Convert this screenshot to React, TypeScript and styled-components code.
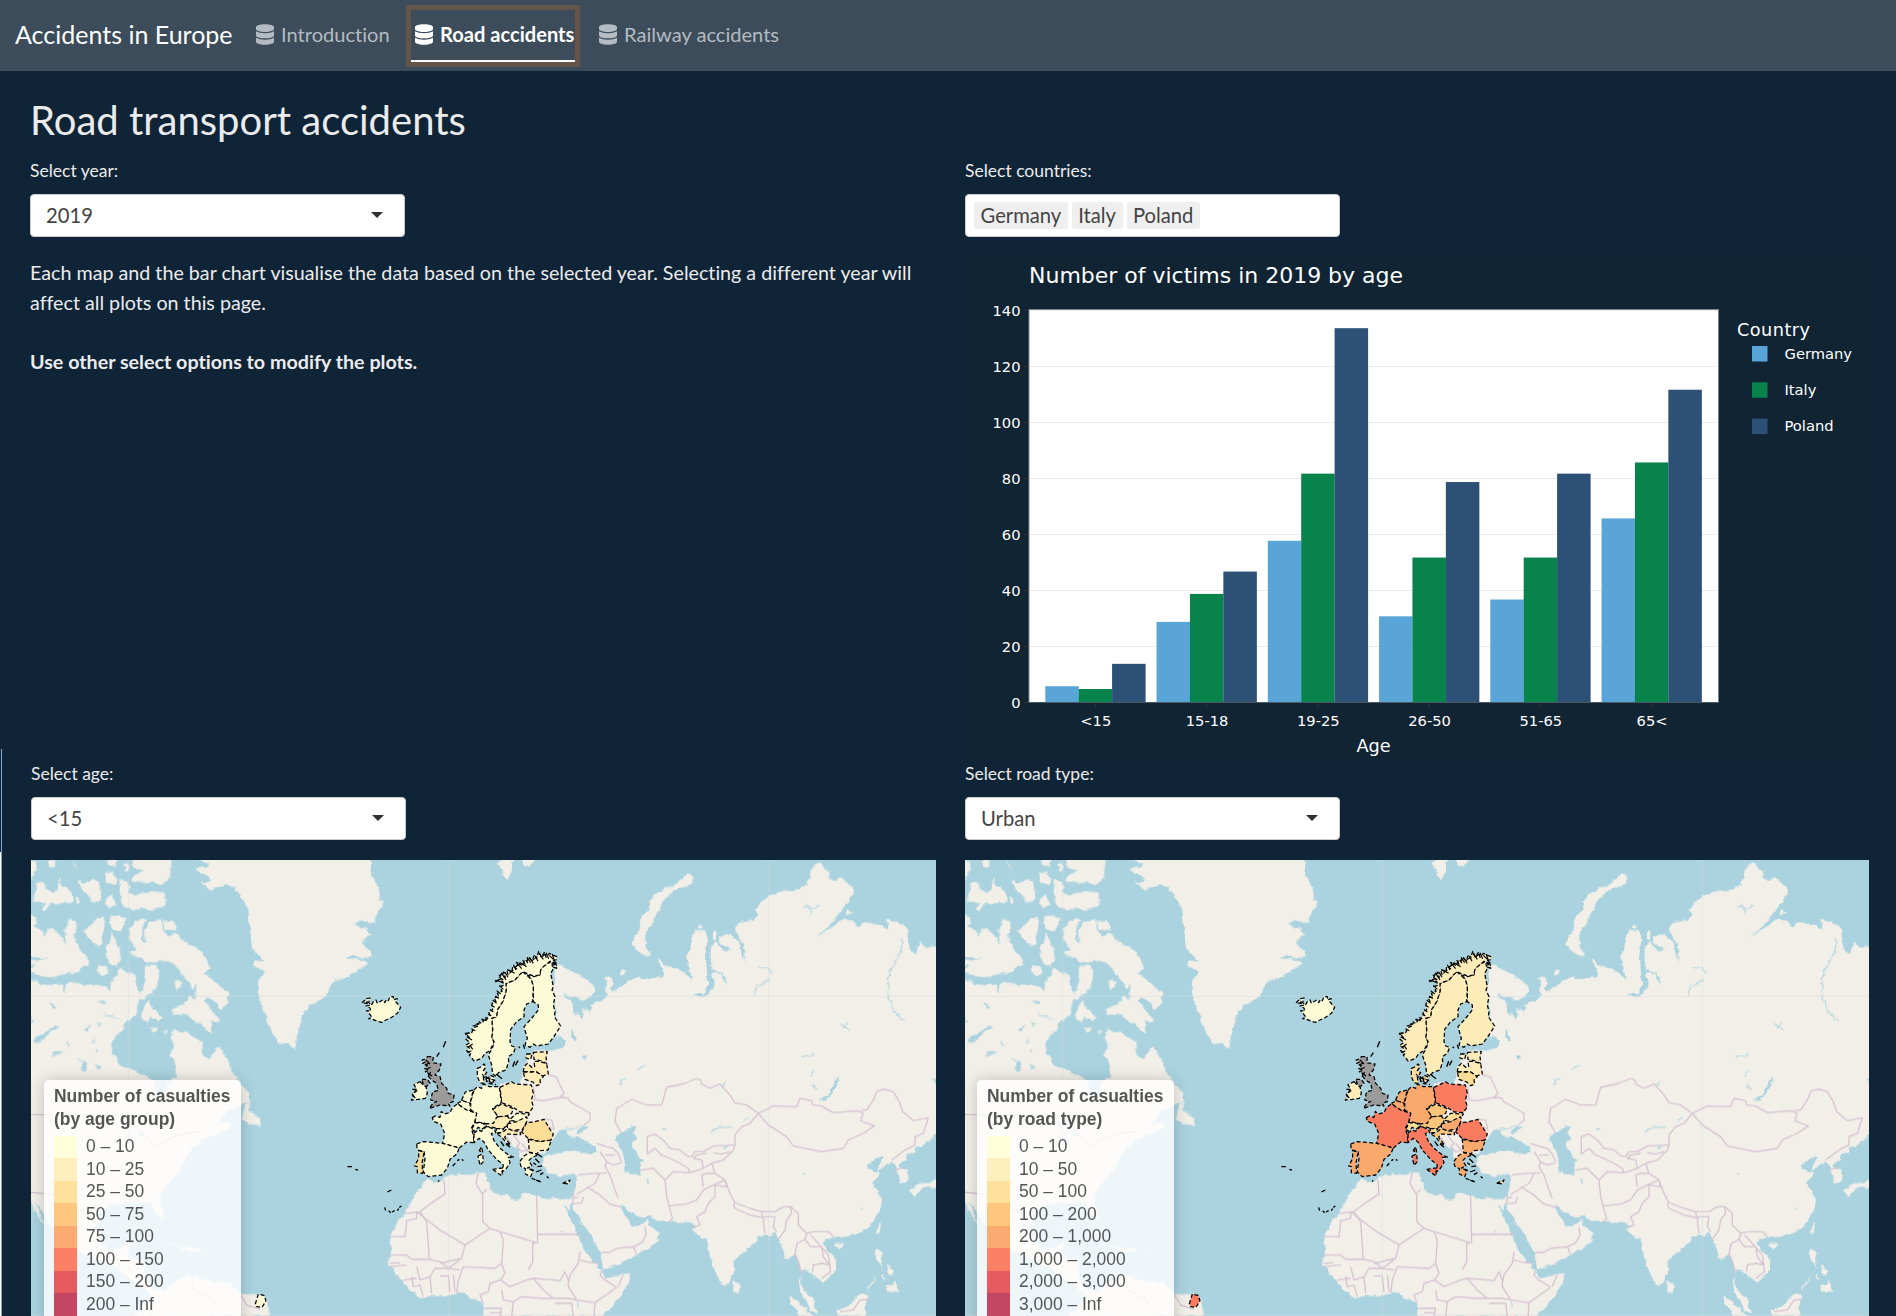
import React from "react";
import styled, { createGlobalStyle } from "styled-components";
import { FaDatabase } from "react-icons/fa";

const GlobalStyle = createGlobalStyle`
  * { box-sizing: border-box; }
  body { margin: 0; background: #0f2437; }
`;

const Page = styled.div`
  height: 1316px;
  overflow: hidden;
  background: #0f2437;
  color: #ebebeb;
  font-family: Lato, "Liberation Sans", sans-serif;
  font-variant-ligatures: none;
`;

const Navbar = styled.nav`
  display: flex;
  align-items: center;
  height: 71px;
  padding-left: 15px;
  background: #3c4c5a;
`;

const Brand = styled.div`
  width: 241px;
  padding-bottom: 3px;
  color: #fff;
  font-size: 25px;
  line-height: 36px;
  white-space: nowrap;
`;

const NavItem = styled.div<{ $active?: boolean; $width: number }>`
  display: flex;
  align-items: center;
  gap: 7px;
  flex: none;
  width: ${(p) => p.$width}px;
  height: ${(p) => (p.$active ? 62 : 36)}px;
  padding-left: ${(p) => (p.$active ? 4 : 0)}px;
  padding-bottom: ${(p) => (p.$active ? 3 : 3)}px;
  border: ${(p) => (p.$active ? "5px solid #64554b" : "0")};
  box-shadow: ${(p) => (p.$active ? "inset 0 -2px 0 #fff" : "none")};
  color: ${(p) => (p.$active ? "#fff" : "#b4bbc2")};
  font-size: 20.1px;
  font-weight: ${(p) => (p.$active ? 700 : 400)};
  white-space: nowrap;
  svg { width: 18px; height: 21px; flex: none; }
`;

const NavGap = styled.div<{ $width: number }>`
  flex: none;
  width: ${(p) => p.$width}px;
`;

const Heading = styled.h1`
  margin: 24px 0 13px 30px;
  font-size: 40px;
  font-weight: 400;
  line-height: 50px;
`;

const Columns = styled.section<{ $height: number; $left: number }>`
  position: relative;
  display: grid;
  grid-template-columns: ${(p) => 965 - p.$left}px 905px;
  height: ${(p) => p.$height}px;
  padding-left: ${(p) => p.$left}px;
`;

/* Thin scroll track that shows along the window's left side. */
const Track = styled.div`
  position: absolute;
  left: 0;
  top: -12px;
  bottom: 0;
  width: 2px;
  border-right: 1px solid #86a3c4;
  background: linear-gradient(#0f2437 103px, #fff 103px);
`;

const Column = styled.div`
  display: flex;
  flex-direction: column;
`;

const Label = styled.label`
  margin-bottom: 10px;
  font-size: 17.5px;
  line-height: 26px;
`;

const SelectBox = styled.div<{ $tags?: boolean }>`
  display: flex;
  align-items: center;
  justify-content: space-between;
  width: 375px;
  height: 43px;
  padding: ${(p) => (p.$tags ? "0 8px 1px" : "0 21px 2px 15px")};
  border: 1px solid #ccc;
  border-radius: 4px;
  background: #fff;
  color: #444;
  font-size: 20.2px;
`;

const Caret = styled.span`
  border: 6px solid transparent;
  border-top-color: #303030;
  border-bottom: 0;
`;

const Tags = styled.div`
  display: flex;
  gap: 4px;
`;

const Tag = styled.span`
  padding: 0 6.5px;
  border-radius: 3px;
  background: #efefef;
  line-height: 27px;
`;

const Text = styled.p<{ $strong?: boolean }>`
  margin: ${(p) => (p.$strong ? "29.6px 0 0" : "21px 0 0")};
  width: 900px;
  font-size: 19.7px;
  font-weight: ${(p) => (p.$strong ? 700 : 400)};
  line-height: 29.6px;
`;

const ChartPanel = styled.svg`
  display: block;
  margin-top: 20px;
  background: #112433;
  font-family: Verdana, "DejaVu Sans", sans-serif;
`;

const MapFrame = styled.div<{ $width: number }>`
  position: relative;
  width: ${(p) => p.$width}px;
  height: 456px;
  margin-top: 20px;
  overflow: hidden;
  background: #aad3df;
`;

const MapCanvas = styled.svg`
  position: absolute;
  inset: 0;
  width: 905px;
  height: 456px;
`;

const Legend = styled.div<{ $left: number }>`
  position: absolute;
  left: ${(p) => p.$left}px;
  top: 220px;
  width: 197px;
  height: 260px;
  padding: 5px 10px;
  border-radius: 5px;
  background: rgba(255, 255, 255, 0.8);
  box-shadow: 0 0 15px rgba(0, 0, 0, 0.2);
  color: #555;
  font-family: "Liberation Sans", Arial, sans-serif;
  font-size: 17.45px;
`;

const LegendTitle = styled.div`
  margin-bottom: 4px;
  font-weight: 700;
  line-height: 23.3px;
  white-space: nowrap;
`;

const LegendRow = styled.div`
  display: flex;
  align-items: center;
  gap: 9.5px;
  height: 22.5px;
  white-space: nowrap;
`;

const Swatch = styled.span<{ $color: string }>`
  width: 22.5px;
  height: 100%;
  background: ${(p) => p.$color};
`;

/* ---------- bar chart ---------- */

const SERIES = [
  { name: "Germany", color: "#5aa5d8", values: [6, 29, 58, 31, 37, 66] },
  { name: "Italy", color: "#08834b", values: [5, 39, 82, 52, 52, 86] },
  { name: "Poland", color: "#2d5077", values: [14, 47, 134, 79, 82, 112] },
];
const AGES = ["<15", "15-18", "19-25", "26-50", "51-65", "65<"];
const TICKS = [0, 20, 40, 60, 80, 100, 120, 140];
const yOf = (v: number) => 446 - v * 2.797;

function VictimsChart() {
  return (
    <ChartPanel width="905" height="500" viewBox="0 0 905 500">
      <text x="64" y="25.5" fontSize="22" fill="#fff" textLength="374">Number of victims in 2019 by age</text>
      <rect x="64" y="52.5" width="689.5" height="393" fill="#fff" stroke="#7c878d" />
      {TICKS.map((t) => (
        <g key={t}>
          <line x1="64.5" x2="753" y1={Math.round(yOf(t)) - 0.5} y2={Math.round(yOf(t)) - 0.5} stroke="#ebebeb" />
          <line x1="59" x2="64" y1={Math.round(yOf(t)) - 0.5} y2={Math.round(yOf(t)) - 0.5} stroke="#333" />
          <text x="55.5" y={yOf(t) + 4.8} fontSize="14.7" fill="#fff" textAnchor="end">{t}</text>
        </g>
      ))}
      {AGES.map((age, i) => {
        const left = 80.3 + i * 111.25;
        return (
          <g key={age}>
            {SERIES.map((s, k) => (
              <rect key={s.name} x={left + k * 33.4} y={yOf(s.values[i])} width="33.5" height={446 - yOf(s.values[i])} fill={s.color} />
            ))}
            <line x1={left + 50.1} x2={left + 50.1} y1="446" y2="451" stroke="#333" />
            <text x={left + 50.5} y="469" fontSize="14.7" fill="#fff" textAnchor="middle">{age}</text>
          </g>
        );
      })}
      <line x1="64" x2="754" y1="445.5" y2="445.5" stroke="#4c5a66" />
      <text x="408.5" y="495" fontSize="17.7" fill="#fff" textAnchor="middle">Age</text>
      <text x="772" y="78.5" fontSize="17.7" fill="#fff" textLength="73">Country</text>
      {SERIES.map((s, k) => (
        <g key={s.name}>
          <rect x="787" y={89 + k * 36.3} width="15.5" height="15.5" fill={s.color} />
          <text x="819.5" y={101.5 + k * 36.3} fontSize="14.7" fill="#fff">{s.name}</text>
        </g>
      ))}
    </ChartPanel>
  );
}

/* ---------- maps ---------- */

const EURASIA =
  "M345,345 365,350 385,358 410,370 440,388 462,405 466,425 455,440 435,450 410,445 385,435 372,428 378,440 392,450 398,462 398,480 402,495 415,490 425,505 432,492 425,478 440,480 452,485 455,465 470,455 490,447 500,435 498,415 500,395 490,383 505,380 520,390 522,405 512,412 515,425 528,425 538,410 560,398 580,385 600,378 615,388 640,382 655,375 668,382 672,370 662,350 652,335 655,325 670,345 690,350 710,352 735,370 755,390 752,370 742,345 740,310 752,290 758,260 768,240 790,240 802,255 800,290 798,325 800,350 802,385 808,400 798,420 792,436 775,430 762,435 780,443 797,443 810,425 820,410 822,390 812,375 825,368 845,372 852,392 863,408 855,385 850,370 830,364 815,360 812,325 812,290 826,280 832,262 826,240 820,240 818,262 832,280 850,300 875,300 855,290 835,275 840,258 870,250 880,265 900,275 905,300 913,335 914,300 905,270 890,250 888,220 920,212 945,208 955,195 948,180 960,160 985,140 1010,128 1040,122 1075,118 1085,110 1105,105 1100,95 1112,85 1108,65 1120,48 1140,40 1155,55 1170,68 1160,85 1185,90 1205,85 1225,95 1238,115 1238,135 1225,155 1205,180 1180,210 1160,235 1125,262 1170,235 1195,215 1215,205 1240,215 1255,232 1280,215 1310,222 1345,238 1342,210 1365,212 1390,222 1405,240 1400,270 1410,295 1425,315 1435,290 1440,278 1455,290 1500,290 1500,845 1465,875 1445,888 1430,890 1425,905 1400,915 1398,930 1378,940 1380,950 1400,960 1405,985 1400,1000 1378,1003 1375,980 1372,965 1368,948 1358,935 1340,942 1322,955 1312,962 1318,945 1328,925 1320,920 1300,935 1283,943 1287,955 1300,962 1320,968 1312,980 1298,992 1305,1010 1318,1030 1325,1050 1322,1075 1310,1095 1300,1115 1280,1135 1255,1150 1225,1155 1200,1160 1178,1160 1160,1165 1148,1180 1160,1198 1178,1215 1188,1235 1188,1260 1170,1280 1148,1302 1140,1290 1120,1278 1105,1262 1090,1258 1082,1275 1080,1300 1095,1325 1115,1340 1125,1365 1132,1392 1115,1385 1105,1365 1090,1340 1080,1318 1076,1290 1085,1270 1080,1240 1065,1215 1060,1212 1050,1222 1035,1225 1030,1200 1020,1180 1012,1160 1005,1145 990,1155 975,1157 955,1160 950,1175 925,1195 900,1215 880,1230 882,1255 878,1275 866,1298 852,1308 838,1292 820,1250 808,1210 803,1180 800,1165 790,1168 770,1152 758,1135 770,1130 750,1118 720,1115 685,1117 650,1112 632,1098 610,1103 585,1095 560,1080 550,1062 540,1060 545,1080 565,1110 575,1130 595,1128 610,1120 625,1108 625,1122 640,1138 662,1150 650,1175 625,1195 600,1210 575,1222 545,1238 515,1250 490,1260 485,1235 482,1210 465,1180 450,1150 430,1125 415,1100 400,1075 395,1060 392,1045 400,1035 408,1010 408,985 405,975 385,970 360,978 345,972 320,970 312,950 305,935 320,915 345,912 375,902 400,900 430,908 455,915 470,908 468,890 450,878 430,870 415,860 425,848 440,838 440,828 420,838 408,846 420,855 395,862 380,842 365,838 350,850 342,860 330,880 325,905 310,912 265,920 235,925 240,900 215,885 190,850 185,840 180,700 240,700 250,685 250,650 285,600 325,604 340,598 370,590 350,570 345,530 350,480 340,420Z";

const AFRICA =
  "M397,1045 375,1048 350,1045 320,1048 290,1040 265,1030 245,1028 238,1050 215,1048 195,1035 165,1030 145,1018 150,1000 140,990 135,968 115,968 90,975 60,972 20,980 0,992 -20,995 -37,985 -74,1030 -102,1090 -125,1110 -151,1160 -144,1200 -156,1237 -130,1275 -110,1298 -85,1325 -53,1345 -20,1335 12,1340 50,1330 75,1328 85,1345 110,1350 130,1360 130,1400 480,1400 510,1378 540,1340 560,1305 572,1270 545,1272 520,1278 495,1282 485,1265 465,1240 440,1210 425,1180 410,1150 395,1115 380,1085 370,1062 385,1082 393,1062Z";

const EAST_ISLANDS = [
  "M745,72 762,85 755,100 730,112 700,125 680,140 665,165 650,190 640,215 625,240 615,265 618,290 637,318 610,315 595,305 577,285 585,260 598,240 605,205 625,180 628,155 650,130 675,112 700,108 720,92Z",
  "M172,38 190,28 220,28 215,60 205,92 190,68Z M250,28 283,28 268,50 250,46Z",
  "M540,365 548,354 558,360 552,374 542,376Z M773,230 780,220 788,232 778,236Z M1218,188 1226,178 1235,186 1226,197Z",
  "M880,1290 900,1310 895,1330 880,1328Z M1185,1190 1197,1178 1210,1182 1197,1197Z M1325,1117 1315,1155 1308,1140Z",
  "M1312,1192 1330,1210 1322,1245 1330,1258 1305,1225Z M1345,1245 1362,1262 1355,1280 1345,1270Z M1325,1265 1340,1290 1330,1285Z M1340,1310 1365,1295 1375,1325 1345,1325Z M1320,1268 1280,1322 1284,1310Z",
  "M1190,1385 1220,1370 1240,1350 1265,1330 1290,1340 1275,1360 1280,1400 1195,1400Z M1042,1335 1070,1350 1105,1385 1120,1400 1080,1400 1060,1370Z",
  "M1410,1020 1430,1005 1450,998 1470,1000 1500,980 1500,1010 1455,1012 1440,1015 1425,1042Z",
];

const EAST_WATER = [
  "M590,830 575,828 560,838 540,850 527,862 532,880 545,900 552,920 555,950 550,965 570,972 602,973 600,940 612,930 595,915 578,895 580,880 590,865 580,850Z",
  "M1195,678 1197,690 1180,730 1155,752 1135,750 1165,738Z",
  "M350,560 365,560 375,575 370,592 352,588Z M395,540 403,545 410,570 402,575 394,560Z M428,615 440,620 438,630 428,625Z",
  "M1475,690 1500,680 1500,710 1485,700Z M622,988 630,995 620,998Z M1088,968 1098,972 1092,978Z M1262,1068 1269,1072 1264,1075Z",
  "M320,905 345,903 342,910 322,910Z M665,835 682,835 672,840Z M850,890 870,893 852,898Z",
];

const EAST_RIVERS = [
  "M1385,265 Q1388,310 1370,325 Q1340,370 1345,430 Q1350,480 1395,515",
  "M815,850 Q815,832 845,833 L880,830",
  "M1090,170 1120,175 1142,165 M1100,165 1115,192 M1128,175 1135,160",
  "M955,350 985,355 995,370 M965,400 990,390 M955,410 975,402 M945,435 950,400",
  "M540,710 545,690 560,682 M595,660 615,645 M850,710 855,695 M1085,620 1120,615 M1112,680 1125,660 M1115,700 1130,720 M1200,520 1225,540 M1210,535 1220,515",
  "M372,1065 385,1085 M365,1140 370,1145 M365,840 440,828 M410,1350 415,1370 M925,800 912,810",
];

const EAST_BORDERS = [
  "M545,850 525,815 530,775 575,748 620,765 665,765 672,740 680,712 735,700 770,685 782,690 785,702 810,715 840,702 870,735 885,758 920,765 955,790 930,820 905,830 885,855 885,885 820,888 790,905 765,905 755,920 742,918 720,900 690,895 670,870 645,852 622,860 622,912",
  "M955,790 1000,768 1070,770 1080,745 1115,752 1118,765 1145,768 1180,788 1250,782 1270,790 1262,812 1303,828 1270,850 1225,870 1210,895 1145,905 1060,888 1040,860 985,825 955,790",
  "M1262,782 1280,780 1300,750 1312,722 1335,718 1360,725 1378,755 1388,785 1420,812 1465,803 1450,850 1425,860 1425,885 M1355,930 1395,900 1425,885 M1368,960 1390,952",
  "M622,912 645,895 665,915 690,925 720,940 745,955 750,968 M602,960 640,955 660,975 675,990 700,965 750,968 775,960 790,955 785,930 760,925 770,915 800,910 M790,955 815,940 825,970 855,990 820,1005 790,1020 770,1050 740,1062 685,1068 M675,990 680,1040 690,1080 698,1105 685,1117",
  "M815,940 850,930 880,900 885,885 M825,970 800,970 785,975 790,1010 M855,990 870,1030 885,1058 930,1075 965,1085 M880,1060 885,1075 930,1095 968,1103 965,1085 1005,1085 1030,1070 1052,1070 1055,1090 1040,1110 1035,1140 1015,1168 M973,1100 970,1115 975,1150 M973,1100 1005,1100 1000,1130 1010,1145",
  "M855,990 860,1010 825,1005 825,1040 805,1060 795,1085 770,1100 780,1125 758,1132",
  "M1052,1070 1075,1090 1075,1125 1100,1150 1120,1145 1165,1145 1180,1160 M1100,1150 1095,1168 1072,1180 1065,1210 1075,1235 1085,1270 M1095,1168 1112,1190 1145,1190 1150,1220 1168,1245 1148,1240 1120,1245 1118,1265 M1112,1155 1135,1180 1165,1215 1172,1265 1145,1285",
  "M470,880 500,890 520,895 535,912 545,935 M480,905 500,935 520,945 545,938 M495,915 525,915 M500,935 495,950 510,975 525,1020 535,1045 M415,975 440,972 500,968 M480,970 465,1000 410,1033 M440,1010 480,1035 510,1062 545,1072 M400,1030 398,1062 425,1058 430,1040 M400,1045 415,1040",
  "M485,1207 510,1207 530,1195 580,1190 605,1178 618,1155 615,1130 M580,1190 590,1213",
  "M278,748 310,752 345,745 370,742 385,745 390,755 425,775 450,790 450,810 432,825 M325,675 348,680 372,730 360,742 M280,710 285,745 M310,808 335,810 342,838 325,830",
  "M220,855 240,880 230,890 245,905 265,900 M200,862 215,882 M245,880 265,905",
  "M290,1040 293,1178 M293,1153 420,1153 M293,1178 278,1180 278,1235 265,1260 M115,968 108,1000 128,1035 128,1115 150,1135 180,1145 290,1178 M128,1030 140,1018 M150,1135 75,1185 0,1140 -70,1085 M75,1185 65,1225 0,1240 M180,1145 190,1170 185,1240 165,1255 70,1250 55,1290 50,1330",
  "M12,990 15,1032 -20,1055 -60,1085 -100,1090 M-70,1085 -70,1105 -100,1112 -105,1160 -151,1160 M-40,1115 -32,1228 -85,1228 -100,1215 -150,1215 M-100,1245 -150,1250 M-70,1285 -110,1290 M-32,1228 0,1235 25,1255 60,1260 M-70,1250 -60,1290 -30,1280 -15,1255 25,1255 M-30,1280 -25,1330 M0,1278 25,1278 30,1325 M40,1275 45,1325 M-85,1280 -80,1310 -60,1305 -50,1340 M25,1255 60,1230 M-150,1240 -120,1238 M-40,1115 -60,1085",
  "M185,1240 195,1270 182,1290 150,1300 145,1325 120,1335 130,1360 M182,1290 210,1310 260,1290 280,1285 340,1290 360,1292 375,1265 385,1290 M280,1285 310,1320 340,1345 385,1345 410,1350 M185,1320 190,1350 220,1355 245,1340 310,1345 340,1345 M385,1290 385,1310 410,1350 465,1358 530,1312 495,1290 480,1275 485,1262 M420,1230 440,1235 475,1240 M420,1205 415,1240 390,1275 385,1300 M535,1310 550,1272 M465,1358 462,1400 M135,1375 185,1375 180,1400 M220,1355 215,1400 M345,1360 395,1360 400,1400 M150,1388 180,1388",
  "M1200,1385 1240,1380 1260,1350 1285,1348 M820,908 845,912 870,905",
];

const CANADA =
  "M-5,390 20,388 30,402 60,405 95,400 106,432 110,400 150,398 165,405 200,402 225,410 240,420 245,390 262,375 268,350 285,362 300,370 310,395 325,415 330,440 322,470 320,495 305,505 290,515 275,540 255,560 245,590 250,615 265,635 270,650 300,655 330,672 355,685 375,692 380,740 400,745 415,695 438,680 435,640 420,615 428,590 422,560 430,540 465,545 490,560 515,575 515,610 540,625 555,605 568,588 585,620 600,650 615,680 635,705 655,725 660,755 625,770 590,785 560,830 525,840 560,830 590,810 600,830 570,849 510,871 470,915 450,959 415,1000 392,1035 402,1108 380,1091 360,1058 320,1055 280,1058 235,1070 210,1085 200,1135 215,1180 240,1201 275,1195 300,1175 295,1224 345,1235 345,1290 370,1320 400,1325 430,1300 480,1273 530,1290 600,1301 635,1332 690,1332 710,1350 722,1398 310,1400 370,1340 310,1290 250,1250 140,1202 100,1165 70,1136 40,1090 15,1050 45,1130 20,1090 -5,1040Z";

const ARCTIC = [
  "M-5,185 22,215 10,228 35,240 45,260 48,238 65,235 85,250 100,268 108,285 103,240 112,215 120,207 138,215 140,235 132,255 145,290 160,310 178,330 178,345 155,350 140,368 110,370 80,380 50,383 20,375 -5,365Z",
  "M200,205 222,200 225,220 218,250 215,285 205,292 190,275 170,262 162,240 185,225Z",
  "M240,200 260,193 290,203 280,225 268,245 250,235 240,220Z M245,245 255,275 268,295 272,325 260,350 240,340 228,315 228,290 240,275Z",
  "M205,345 230,350 235,370 215,380 200,365Z",
  "M298,270 300,240 315,215 340,205 352,208 337,235 335,270 345,278 342,240 355,222 370,212 390,208 400,240 415,260 440,250 460,270 480,285 510,300 530,325 540,355 520,370 545,385 565,405 600,432 590,460 575,478 555,455 535,440 520,455 545,475 565,505 568,520 540,510 550,555 520,530 490,510 470,490 430,495 425,480 440,470 465,462 475,440 490,425 480,400 465,385 440,350 415,330 385,335 355,340 330,325 305,320 300,305 320,300Z",
  "M395,210 430,215 442,240 420,240 405,238Z M345,350 375,345 387,360 385,405 370,425 340,450 325,440 340,410 348,390 345,370Z",
  "M345,465 330,500 350,520 360,500 375,505 385,515 397,500 380,485 365,475 355,450Z M435,395 445,388 457,395 456,410 442,418 433,412Z M360,535 378,528 378,540 366,545Z M400,545 408,540 408,555Z M300,365 312,370 318,390 308,398Z",
  "M268,90 290,95 300,110 298,130 330,135 350,125 380,125 405,130 405,150 400,170 370,180 340,175 310,180 285,175 272,150Z",
  "M305,25 425,25 420,80 400,105 380,98 350,100 320,95 303,90 312,75 340,65 310,52Z",
  "M230,145 245,133 258,150 258,168 240,172 228,160Z M143,85 160,98 180,95 190,85 210,95 213,125 208,155 185,155 175,130 158,125Z",
  "M20,100 35,95 50,115 70,130 85,110 92,80 98,110 125,120 128,155 95,160 65,160 45,182 38,175 45,160 5,155 15,130Z",
  "M50,30 78,28 78,48 58,52Z M230,30 262,30 258,48 235,45Z M225,70 245,68 262,88 258,105 232,98Z M-3,28 18,35 20,60 -3,100Z M128,30 145,65 132,45Z M138,145 148,145 148,158 138,156Z M283,40 298,42 296,62 285,60Z",
  "M635,810 645,765 660,755 658,785 690,800 692,830 660,820Z",
  "M450,1190 520,1198 505,1207 455,1202Z M540,1205 555,1206 545,1210Z M400,1178 460,1195 420,1180Z",
];

const CANADA_WATER = [
  "M10,575 20,560 50,545 70,530 92,530 60,545 40,570 15,578Z M60,620 75,603 105,605 75,612Z M155,660 160,630 172,640 162,665Z M3,345 15,345 5,360Z",
  "M200,455 230,450 225,460Z M215,485 245,498 280,512 240,500Z M165,540 185,520 175,545Z M205,512 215,520 208,530Z M110,580 115,570 118,590Z M200,640 210,650 200,660Z M188,560 195,570 190,580Z M60,455 80,470 70,475Z M195,600 205,602 196,608Z M140,622 160,632 150,632Z M3,500 8,512 3,520Z",
  "M-3,318 30,325 55,322 25,332 -3,328Z M480,430 500,400 495,450Z M270,810 300,820 290,830Z M290,840 305,870 300,890Z M320,835 350,855 330,860Z",
];

const WEST_BORDERS = [
  "M-3,794 270,794 300,815 330,840 375,890 430,860 470,850 520,845",
  "M-3,1026 55,1032 100,1040 130,1075 160,1080 195,1120",
  "M485,1275 490,1320 540,1345 560,1370 M630,1332 650,1365 690,1378 M250,1210 270,1250",
];

const GREENLAND =
  "M45,25 570,25 575,60 572,80 588,100 600,120 598,150 615,155 598,180 585,200 590,220 565,222 545,210 520,225 560,235 570,255 545,275 530,250 555,290 572,300 575,322 545,325 515,315 500,325 540,328 568,338 535,362 500,380 468,392 455,400 440,435 410,460 385,465 368,500 355,545 345,597 320,580 295,578 270,535 255,490 235,440 238,390 255,365 240,355 222,350 222,330 250,335 235,315 215,290 210,230 205,180 185,140 165,115 140,102 95,118 65,98 95,90 65,70 45,60 90,45Z";

type Country = { id: string; d: string; fills: [string, string] };

const C = {
  a: "#fdfbd5",
  b: "#fdebb8",
  c: "#fcdd95",
  d: "#fbc67b",
  e: "#faa96d",
  f: "#f97c60",
  none: "#9c9b9b",
};

const COUNTRIES: Country[] = [
  { id: "Iceland", fills: [C.a, C.a], d: "M66,248 75,240 82,250 80,236 90,234 86,248 94,256 100,245 108,240 112,250 118,246 128,240 134,248 140,238 145,242 150,230 160,230 160,240 172,236 168,246 182,262 172,280 155,292 138,300 125,307 110,303 98,298 86,296 96,292 90,284 80,272 92,274 90,264 78,258 88,256 80,250Z" },
  { id: "Ireland", fills: [C.a, C.b], d: "M240,485 250,495 258,500 262,520 256,535 235,538 214,540 222,530 216,520 228,515 218,508 230,508 222,494Z" },
  { id: "United Kingdom", fills: [C.none, C.none], d: "M262,410 280,410 278,428 303,432 298,450 285,465 300,470 305,490 320,505 325,520 342,525 340,545 325,550 330,558 300,555 285,560 268,565 280,548 290,545 272,540 278,515 295,512 290,490 275,480 262,465 270,462 256,455 268,450 254,446 262,436 248,430 256,426 246,420 258,416Z M246,478 262,478 270,490 258,500 250,494Z" },
  { id: "Finland", fills: [C.a, C.b], d: "M620,130 636,126 638,150 632,160 640,200 636,210 645,230 640,255 645,275 643,290 662,318 645,345 625,372 590,378 580,372 570,382 555,375 562,355 552,320 575,295 595,270 595,255 580,245 580,200 574,178 560,165 580,170 600,165 602,145Z" },
  { id: "Sweden", fills: [C.a, C.b], d: "M548,155 574,178 580,200 578,245 560,252 552,270 552,290 530,305 512,328 510,365 515,378 527,382 520,400 505,410 506,425 498,450 475,458 470,470 458,462 455,435 445,405 457,385 462,365 455,355 458,330 455,295 470,290 472,270 488,245 498,215 498,190 525,180 535,168Z" },
  { id: "Norway", fills: [C.a, C.b], d: "M650,145 638,140 644,128 630,124 620,132 604,145 598,165 580,168 548,155 535,168 525,180 498,190 498,215 488,245 472,270 470,290 455,295 458,330 455,355 462,365 450,392 435,400 425,415 403,424 388,405 394,400 380,392 388,384 376,376 390,368 378,358 388,352 376,340 395,338 402,322 414,318 410,312 430,305 428,296 440,298 450,285 446,275 458,270 456,250 468,245 462,232 478,232 472,220 486,214 480,200 492,196 488,184 466,182 486,176 478,166 496,172 490,156 504,164 500,148 516,156 518,138 530,146 534,124 546,138 556,118 564,130 562,110 576,122 584,104 590,116 596,94 604,112 614,96 618,112 628,100 650,110 648,120 636,122Z" },
  { id: "Denmark", fills: [C.a, C.c], d: "M412,445 425,440 432,432 438,440 430,452 440,458 430,470 432,490 420,488 412,470Z M438,470 448,478 440,485Z M452,466 464,472 460,486 448,482Z M446,490 468,494" },
  { id: "Estonia", fills: [C.b, C.b], d: "M580,397 622,395 618,408 620,430 600,422 582,418Z M560,402 576,402 572,418 558,414Z" },
  { id: "Latvia", fills: [C.b, C.b], d: "M550,456 552,440 562,430 575,442 584,440 582,424 600,424 620,432 625,462 608,468 590,456Z" },
  { id: "Lithuania", fills: [C.b, C.c], d: "M550,456 590,456 610,470 600,480 602,492 590,497 578,486 555,478Z" },
  { id: "Poland", fills: [C.b, C.f], d: "M480,502 515,485 525,492 574,495 580,520 574,540 580,560 568,578 540,576 520,562 485,548Z" },
  { id: "Germany", fills: [C.a, C.e], d: "M402,510 412,500 425,505 430,492 448,500 478,500 484,548 458,565 475,592 468,608 455,615 435,610 405,605 410,580 392,570 392,545Z" },
  { id: "Netherlands", fills: [C.a, C.e], d: "M365,540 376,516 400,510 395,530 390,550 375,546Z" },
  { id: "Belgium", fills: [C.a, C.e], d: "M352,550 368,542 390,550 392,568 388,574 372,566Z" },
  { id: "France", fills: [C.a, C.f], d: "M277,593 286,588 300,592 304,574 312,582 330,578 338,562 352,552 380,570 410,580 404,606 394,625 400,645 402,668 380,666 358,684 308,670 314,640 302,612 280,604Z M418,692 425,680 428,698Z" },
  { id: "Spain", fills: [C.a, C.e], d: "M230,672 250,665 308,670 358,684 350,702 330,718 322,745 305,765 265,770 250,756 255,715 252,694 232,690Z" },
  { id: "Portugal", fills: [C.c, C.e], d: "M236,692 252,696 246,730 248,760 232,758 232,740 224,738 236,715Z" },
  { id: "Switzerland", fills: [C.a, C.c], d: "M396,626 406,608 430,610 436,620 425,628 415,622 402,634Z" },
  { id: "Italy", fills: [C.a, C.f], d: "M402,640 414,630 425,634 440,618 462,628 468,638 454,640 462,662 480,685 505,705 522,712 505,712 510,728 496,750 486,755 490,735 470,718 445,690 432,666 418,655 402,668Z M458,748 488,744 486,768Z M414,708 428,702 430,725 420,736Z" },
  { id: "Austria", fills: [C.b, C.d], d: "M436,612 460,610 470,592 500,586 512,600 502,618 480,628 460,622 440,620Z" },
  { id: "Czechia", fills: [C.b, C.d], d: "M458,568 485,552 520,566 515,580 500,588 475,590Z" },
  { id: "Slovakia", fills: [C.a, C.c], d: "M512,596 530,580 568,582 562,594 535,604 512,602Z" },
  { id: "Hungary", fills: [C.b, C.e], d: "M502,612 530,605 560,590 562,602 548,628 515,632 502,622Z" },
  { id: "Slovenia", fills: [C.a, C.c], d: "M468,626 492,626 482,638 470,638Z" },
  { id: "Croatia", fills: [C.b, C.d], d: "M472,642 490,635 502,625 518,632 540,634 542,644 500,642 494,652 512,676 500,670 486,652Z" },
  { id: "Romania", fills: [C.c, C.f], d: "M545,636 560,608 580,606 612,598 630,628 640,642 632,662 600,665 565,656Z" },
  { id: "Bulgaria", fills: [C.b, C.e], d: "M565,658 600,665 634,660 624,690 600,692 590,702 568,696Z" },
  { id: "Greece", fills: [C.a, C.e], d: "M540,724 552,708 568,698 598,704 576,712 566,722 576,738 562,744 580,750 572,770 556,762 556,746 542,738Z M568,746 580,754 M575,775 602,785" },
  { id: "Cyprus", fills: [C.a, C.c], d: "M668,790 690,780 684,792Z" },
  { id: "French Guiana", fills: [C.a, C.f], d: "M-254,1152 -245,1122 -228,1126 -222,1142 -234,1162 -250,1160Z" },
];

/* Fjords and skerries, drawn solid so the ragged coast stays dense. */
const FJORDS =
  "M380,350 396,360 M390,376 398,388 M384,382 398,372 M382,398 394,392 M376,344 390,338 M394,326 406,332 M398,318 418,312 M416,304 424,310 M424,298 440,302 M436,292 444,296 M444,282 454,288 M450,268 460,276 M454,256 464,262 M458,240 470,250 M466,228 476,236 M470,212 482,222 M478,196 490,208 M466,186 480,178 M470,180 488,188 M478,172 490,180 M484,158 498,180 M480,164 494,158 M496,158 504,172 M506,150 524,160 M508,160 520,150 M520,134 528,150 M528,126 545,146 M524,142 540,132 M540,128 560,140 M548,120 556,134 M562,114 572,128 M568,112 580,130 M576,122 592,110 M586,108 594,124 M596,98 610,118 M604,112 616,102 M618,98 626,116 M628,106 640,118 M636,102 650,138 M640,136 650,128 M258,420 270,432 M254,436 266,430 M260,448 272,442 M262,458 276,468 M264,470 272,456 M222,508 232,514 M216,526 226,534 M436,478 448,470 M446,484 458,490 M454,478 466,482 M426,462 436,474";

const ISLETS =
  "M310,382 317,364 M290,410 298,398 M22,740 36,740 M46,748 54,750 M142,816 154,810 M134,862 137,872 M146,872 152,878 M156,876 164,872 M172,872 176,866 M178,862 184,858 M338,738 346,730 M352,722 358,718 M366,718 370,722 M294,782 298,784 M518,440 524,424 M526,436 534,422 M536,380 540,384 M550,374 554,386 M468,462 486,476 M586,716 598,728 M592,740 606,738 M588,756 604,750 M600,764 610,758 M620,770 626,774 M580,728 588,734 M596,704 606,712 M588,780 602,786 M482,664 492,678 M498,672 510,682";

function Shapes({ list, ...rest }: { list: string[] } & React.SVGProps<SVGPathElement>) {
  return <>{list.map((d, i) => <path key={i} d={d} {...rest} />)}</>;
}

function EuropeMap({ id, variant }: { id: string; variant: 0 | 1 }) {
  const rough = `url(#rough-${id})`;
  return (
    <MapCanvas viewBox="0 0 2715 1368">
      <defs>
        <filter id={`rough-${id}`} x="0" y="0" width="2715" height="1368" filterUnits="userSpaceOnUse">
          <feTurbulence type="fractalNoise" baseFrequency="0.05" numOctaves="3" seed="4" />
          <feDisplacementMap in="SourceGraphic" scale="15" xChannelSelector="R" yChannelSelector="G" />
        </filter>
      </defs>
      <g filter={rough}>
        <g transform="translate(-3 -30)">
          <g fill="#f2efe9"><path d={CANADA} /><Shapes list={ARCTIC} /></g>
          <g fill="#aad3df"><Shapes list={CANADA_WATER} /></g>
        </g>
        <path transform="translate(447 -30)" fill="#f2efe9" d={GREENLAND} />
        <g transform="translate(1227 -30)">
          <g fill="#f2efe9"><path d={EURASIA} /><path d={AFRICA} /><Shapes list={EAST_ISLANDS} /></g>
          <g fill="#aad3df"><Shapes list={EAST_WATER} /></g>
          <g fill="none" stroke="#b9d9e1" strokeWidth="4"><Shapes list={EAST_RIVERS} /></g>
        </g>
      </g>
      <g fill="none" stroke="#d5c3d1" strokeWidth="4" strokeLinejoin="round">
        <g transform="translate(1227 -30)"><Shapes list={EAST_BORDERS} /></g>
        <g transform="translate(-3 -30)"><Shapes list={WEST_BORDERS} /></g>
      </g>
      <path d="M0,409 H2715 M292,0 V1368 M1252,0 V1368 M2212,0 V1368 M0,1365 H2715" fill="none" stroke="#d3dcdc" strokeOpacity="0.45" strokeWidth="3" />
      <g transform="translate(927 180)" stroke="#000" strokeWidth="3.8" strokeDasharray="12 7" strokeLinejoin="round">
        {COUNTRIES.map((c) => (
          <path key={c.id} d={c.d} fill={c.fills[variant]} />
        ))}
        <path d={FJORDS} fill="none" strokeWidth="3.4" strokeDasharray="none" />
        <path d={ISLETS} fill="none" strokeWidth="4" strokeDasharray="none" />
      </g>
    </MapCanvas>
  );
}

const RAMP = ["#fffedb", "#fef0bd", "#fee19c", "#fdc77f", "#fbaa72", "#f97f65", "#e55b5f", "#c34763"];

function MapLegend({ left, kind, labels }: { left: number; kind: string; labels: string[] }) {
  return (
    <Legend $left={left}>
      <LegendTitle>Number of casualties<br />({kind})</LegendTitle>
      {labels.map((label, i) => (
        <LegendRow key={label}><Swatch $color={RAMP[i]} />{label}</LegendRow>
      ))}
    </Legend>
  );
}

const AGE_BINS = ["0 – 10", "10 – 25", "25 – 50", "50 – 75", "75 – 100", "100 – 150", "150 – 200", "200 – Inf"];
const ROAD_BINS = ["0 – 10", "10 – 50", "50 – 100", "100 – 200", "200 – 1,000", "1,000 – 2,000", "2,000 – 3,000", "3,000 – Inf"];

export default function App() {
  return (
    <Page>
      <GlobalStyle />
      <Navbar>
        <Brand>Accidents in Europe</Brand>
        <NavItem $width={135}><FaDatabase />Introduction</NavItem>
        <NavGap $width={15} />
        <NavItem $active $width={174}><FaDatabase />Road accidents</NavItem>
        <NavGap $width={19} />
        <NavItem $width={182}><FaDatabase />Railway accidents</NavItem>
      </Navbar>
      <Heading>Road transport accidents</Heading>
      <Columns $height={603} $left={30}>
        <Column>
          <Label>Select year:</Label>
          <SelectBox>2019<Caret /></SelectBox>
          <Text>
            Each map and the bar chart visualise the data based on the selected year. Selecting a different year will
            affect all plots on this page.
          </Text>
          <Text $strong>Use other select options to modify the plots.</Text>
        </Column>
        <Column>
          <Label>Select countries:</Label>
          <SelectBox $tags>
            <Tags><Tag>Germany</Tag><Tag>Italy</Tag><Tag>Poland</Tag></Tags>
          </SelectBox>
          <VictimsChart />
        </Column>
      </Columns>
      <Columns $height={555} $left={31}>
        <Track />
        <Column>
          <Label>Select age:</Label>
          <SelectBox>&lt;15<Caret /></SelectBox>
          <MapFrame $width={905}>
            <EuropeMap id="age" variant={0} />
            <MapLegend left={13} kind="by age group" labels={AGE_BINS} />
          </MapFrame>
        </Column>
        <Column>
          <Label>Select road type:</Label>
          <SelectBox>Urban<Caret /></SelectBox>
          <MapFrame $width={904}>
            <EuropeMap id="road" variant={1} />
            <MapLegend left={12} kind="by road type" labels={ROAD_BINS} />
          </MapFrame>
        </Column>
      </Columns>
    </Page>
  );
}
